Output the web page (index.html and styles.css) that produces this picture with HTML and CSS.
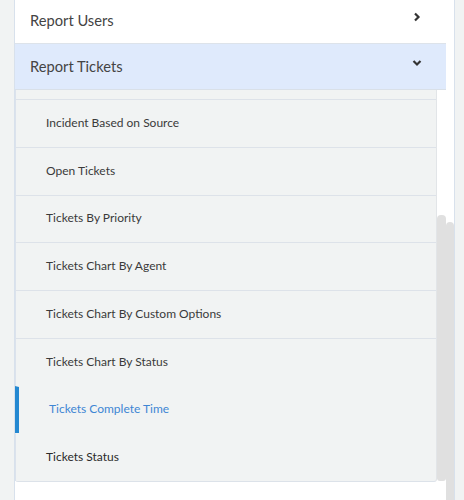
FILE: index.html
```html
<!DOCTYPE html>
<html>
<head>
<meta charset="utf-8">
<link rel="stylesheet" href="styles.css">
</head>
<body>
<div class="panel">
  <div class="main">
    <div class="row users">
      <span>Report Users</span>
      <svg class="chev" width="8" height="10" viewBox="0 0 8 10"><polyline points="2,1.5 5.5,5 2,8.5" fill="none" stroke="#333" stroke-width="2.2"/></svg>
    </div>
    <div class="row tickets">
      <span>Report Tickets</span>
      <svg class="chev down" width="10" height="8" viewBox="0 0 10 8"><polyline points="1.5,2 5,5.5 8.5,2" fill="none" stroke="#333" stroke-width="2.2"/></svg>
    </div>
    <div class="sub">
      <div class="sub-list">
        <div class="strip"></div>
        <div class="item">Incident Based on Source</div>
        <div class="item">Open Tickets</div>
        <div class="item">Tickets By Priority</div>
        <div class="item">Tickets Chart By Agent</div>
        <div class="item">Tickets Chart By Custom Options</div>
        <div class="item">Tickets Chart By Status</div>
        <div class="item active">Tickets Complete Time</div>
        <div class="item nb">Tickets Status</div>
      </div>
      <div class="sub-scroll"><div class="thumb"></div></div>
    </div>
  </div>
  <div class="outer-scroll"><div class="thumb"></div></div>
</div>
</body>
</html>
```
FILE: styles.css
```css
html, body {
  margin: 0;
  padding: 0;
}
body {
  background: #f1f3f3;
  font-family: Lato, "Open Sans", sans-serif;
  height: 500px;
  overflow: hidden;
}
.panel {
  margin-left: 14px;
  width: 439px;
  height: 500px;
  background: #fff;
  border-left: 1px solid #d8e1ec;
  border-right: 1px solid #d8e1ec;
  display: flex;
}
.main {
  width: 431px;
  flex: none;
}
.outer-scroll {
  width: 8px;
  flex: none;
  padding-top: 222px;
  box-sizing: border-box;
  height: 500px;
}
.outer-scroll .thumb {
  height: 100%;
  background: #e0e0e0;
  border-radius: 4px 4px 0 0;
}
.row {
  display: flex;
  align-items: center;
  justify-content: space-between;
  padding-left: 15px;
  padding-right: 25px;
  font-size: 14.7px;
  color: #444;
  box-sizing: border-box;
}
.users {
  height: 44px;
  padding-bottom: 3px;
  border-bottom: 1px solid #dde3ea;
}
.users .chev {
  margin-top: -6px;
}
.tickets {
  height: 46px;
  padding-bottom: 1px;
  background: #dfeafc;
  border-bottom: 1px solid #d9e0e8;
}
.tickets .chev {
  margin-top: -6px;
  margin-right: -1px;
}
.sub {
  display: flex;
  align-items: flex-start;
}
.sub-list {
  width: 422px;
  flex: none;
  background: #f1f3f3;
  border-right: 1px solid #e2e5e8;
  border-bottom: 1px solid #dce2e9;
  border-radius: 0 0 3px 3px;
  box-sizing: border-box;
}
.strip {
  height: 9px;
  border-left: 1px solid #dbe2ec;
}
.item {
  height: 47.75px;
  box-sizing: border-box;
  border-top: 1px solid #dde2e9;
  border-left: 1px solid #dbe2ec;
  padding-left: 30px;
  padding-bottom: 2px;
  display: flex;
  align-items: center;
  font-size: 12px;
  color: #3a3a3a;
}
.item.active {
  border-top-color: transparent;
  border-left: 4px solid #2488d1;
  color: #3e86d4;
}
.item.nb {
  border-top-color: transparent;
  color: #2a2a2a;
}
.sub-scroll {
  width: 9px;
  flex: none;
  padding-top: 125px;
  height: 391px;
  box-sizing: border-box;
}
.sub-scroll .thumb {
  height: 100%;
  background: #e0e0e0;
  border-radius: 4px 4px 3px 3px;
}
```
